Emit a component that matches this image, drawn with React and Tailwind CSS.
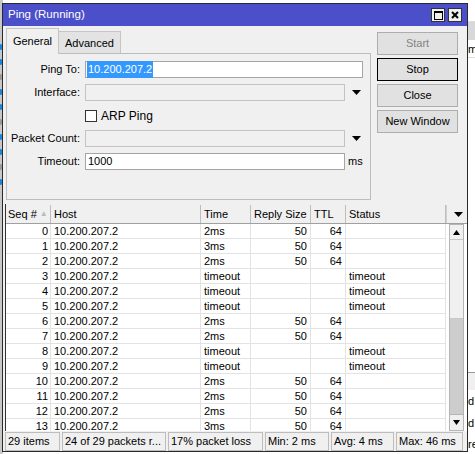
import React from "react";

const rows = [
  [0, "2ms", 50, 64, ""],
  [1, "3ms", 50, 64, ""],
  [2, "2ms", 50, 64, ""],
  [3, "timeout", "", "", "timeout"],
  [4, "timeout", "", "", "timeout"],
  [5, "timeout", "", "", "timeout"],
  [6, "2ms", 50, 64, ""],
  [7, "2ms", 50, 64, ""],
  [8, "timeout", "", "", "timeout"],
  [9, "timeout", "", "", "timeout"],
  [10, "2ms", 50, 64, ""],
  [11, "2ms", 50, 64, ""],
  [12, "2ms", 50, 64, ""],
  [13, "3ms", 50, 64, ""],
];

const cols = "grid grid-cols-[45px_150px_50px_60px_35px_100px]";

function Arrow() {
  return (
    <svg width="9" height="5" viewBox="0 0 9 5">
      <path d="M0 0h9L4.5 5z" fill="#000" />
    </svg>
  );
}

function Field({ label, children }) {
  return (
    <div className="flex h-[23px] items-center">
      <div className="w-[74px] pr-[1px] text-right">{label}:</div>
      <div className="ml-[4px] flex items-center">{children}</div>
    </div>
  );
}

function Btn({ children, bold, muted }) {
  return (
    <div
      className={
        "flex h-[23px] items-center justify-center border bg-[#e1e1e1] " +
        (bold ? "border-[#000] border-[1.5px] " : "border-[#adadad] ") +
        (muted ? "text-[#838383]" : "")
      }
    >
      {children}
    </div>
  );
}

export default function App() {
  return (
    <div
      className="relative h-[454px] w-[475px] overflow-hidden bg-white text-[11px] text-black"
      style={{ fontFamily: '"Liberation Sans", Arial, sans-serif' }}
    >
      {/* desktop behind */}
      <div className="flex h-full">
        <div className="flex w-[3px] flex-col gap-[9px] bg-[#c8c8c8] pt-[44px]">
          {Array.from({ length: 10 }).map((_, i) => (
            <div key={i} className={"h-[6px] w-[3px] rounded-r-full " + (i % 3 === 2 ? "bg-[#9a9a9a]" : "bg-[#1c86d8]")} />
          ))}
        </div>
        <div className="flex-1" />
        <div className="flex w-[8px] flex-col bg-white">
          <div className="h-[22px] border-b border-[#ddd]" />
          <div className="h-[18px] bg-[#d8d8d8]" />
          <div className="h-[18px] border-b border-[#ddd] pl-[1px] leading-[18px]">m</div>
          <div className="flex-1" />
          <div className="h-[18px] border-t border-[#999] bg-[#f0f0f0]" />
          <div className="h-[22px] pl-[1px] leading-[22px]">d</div>
          <div className="h-[22px] pl-[1px] leading-[22px]">d</div>
          <div className="h-[20px] pl-[1px] leading-[20px]">re</div>
        </div>
      </div>

      {/* window */}
      <div className="absolute left-[2px] top-[3px] flex h-[449px] w-[466px] flex-col border border-[#2a2a2a] bg-[#f0f0f0]">
        <div className="flex h-[22px] items-center bg-[#4b4fc9] pl-[5px] pr-[5px] text-[11.5px] text-white">
          <span className="flex-1">Ping (Running)</span>
          <div className="flex gap-[3px]">
            <div className="flex h-[14px] w-[14px] items-center justify-center border border-[#333] bg-[#f0f0f0]">
              <div className="h-[9px] w-[9px] border border-black border-t-2" />
            </div>
            <div className="flex h-[14px] w-[14px] items-center justify-center border border-[#333] bg-[#f0f0f0]">
              <svg width="8" height="8" viewBox="0 0 8 8">
                <path d="M1 1l6 6M7 1L1 7" stroke="#000" strokeWidth="2" />
              </svg>
            </div>
          </div>
        </div>

        <div className="flex pl-[3px] pt-[2px]">
          <div className="flex w-[365px] flex-col">
            <div className="flex h-[25px] items-end">
              <div className="relative z-10 -mb-px flex h-[26px] w-[53px] items-center justify-center border border-b-0 border-[#c5c5c5] bg-[#f0f0f0] pb-[1px]">
                General
              </div>
              <div className="flex h-[22px] w-[62px] items-center justify-center border border-b-0 border-l-0 border-[#c5c5c5] bg-[#e3e3e3] pt-[2px]">
                Advanced
              </div>
            </div>
            <div className="flex h-[147px] flex-col border border-[#bdbdbd] pt-[4px]">
              <Field label="Ping To">
                <div className="flex h-[17px] w-[278px] items-center border border-[#a5a5a5] bg-white pl-[1px]">
                  <span className="bg-[#3399ff] px-[1px] text-white">10.200.207.2</span>
                </div>
              </Field>
              <Field label="Interface">
                <div className="h-[17px] w-[260px] border border-[#c3c3c3] bg-[#f0f0f0]" />
                <div className="ml-[7px]"><Arrow /></div>
              </Field>
              <div className="flex h-[23px] items-center pl-[78px]">
                <div className="h-[12px] w-[12px] border border-[#333] bg-white" />
                <span className="ml-[4px] text-[12px]">ARP Ping</span>
              </div>
              <Field label="Packet Count">
                <div className="h-[17px] w-[260px] border border-[#c3c3c3] bg-[#f0f0f0]" />
                <div className="ml-[7px]"><Arrow /></div>
              </Field>
              <Field label="Timeout">
                <div className="flex h-[17px] w-[260px] items-center border border-[#a5a5a5] bg-white pl-[2px]">1000</div>
                <span className="ml-[3px]">ms</span>
              </Field>
            </div>
          </div>
          <div className="ml-[6px] flex w-[81px] flex-col gap-[3px] pt-[4px]">
            <Btn muted>Start</Btn>
            <Btn bold>Stop</Btn>
            <Btn>Close</Btn>
            <Btn>New Window</Btn>
          </div>
        </div>

        {/* table */}
        <div className="ml-[2px] mt-[4px] flex h-[227px] flex-col border-l border-[#333]">
          <div className="flex h-[20px] flex-none border-b border-[#a0a0a0] bg-[#f0f0f0] pt-[1px]">
            <div className={cols + " flex-none"}>
              <div className="flex items-center border-r border-[#bdbdbd] pl-[2px]">
                Seq # <span className="ml-[3px] text-[8px] text-[#bbb]">▲</span>
              </div>
              <div className="flex items-center border-r border-[#bdbdbd] pl-[3px]">Host</div>
              <div className="flex items-center border-r border-[#bdbdbd] pl-[3px]">Time</div>
              <div className="flex items-center border-r border-[#bdbdbd] pl-[3px]">Reply Size</div>
              <div className="flex items-center border-r border-[#bdbdbd] pl-[3px]">TTL</div>
              <div className="flex items-center border-r border-[#bdbdbd] pl-[3px]">Status</div>
            </div>
            <div className="flex flex-1 items-center justify-center border-l border-[#d0d0d0] pl-[2px]">
              <Arrow />
            </div>
          </div>
          <div className="flex min-h-0 flex-1 overflow-hidden bg-white">
            <div className="flex-none overflow-hidden">
              {rows.map(([seq, time, size, ttl, status]) => (
                <div key={seq} className={cols + " h-[15px] border-b border-[#e3e3e3] leading-[15px]"}>
                  <div className="border-r border-[#e3e3e3] pr-[2px] text-right">{seq}</div>
                  <div className="border-r border-[#e3e3e3] pl-[3px]">10.200.207.2</div>
                  <div className="border-r border-[#e3e3e3] pl-[3px]">{time}</div>
                  <div className="border-r border-[#e3e3e3] pr-[3px] text-right">{size}</div>
                  <div className="border-r border-[#e3e3e3] pr-[3px] text-right">{ttl}</div>
                  <div className="border-r border-[#e3e3e3] pl-[3px]">{status}</div>
                </div>
              ))}
            </div>
            <div className="w-[3px]" />
            <div className="flex w-[15px] flex-col border border-[#b5b5b5] bg-[#f0f0f0]">
              <div className="flex h-[14px] items-center justify-center">
                <svg width="7" height="5" viewBox="0 0 7 5"><path d="M0 5h7L3.5 0z" fill="#000" /></svg>
              </div>
              <div className="h-[80px] border-y border-[#c8c8c8] bg-[#f0f0f0]" />
              <div className="flex-1 bg-[#cdcdcd]" />
              <div className="flex h-[16px] items-center justify-center border-t border-[#b5b5b5]">
                <svg width="7" height="5" viewBox="0 0 7 5"><path d="M0 0h7L3.5 5z" fill="#000" /></svg>
              </div>
            </div>
          </div>
        </div>

        {/* status bar */}
        <div className="flex h-[20px] gap-[2px] pl-[2px] pr-[4px] pt-[1px]">
          {[
            ["29 items", "w-[55px]"],
            ["24 of 29 packets r...", "w-[104px]"],
            ["17% packet loss", "w-[95px]"],
            ["Min: 2 ms", "w-[64px]"],
            ["Avg: 4 ms", "w-[63px]"],
            ["Max: 46 ms", "flex-1"],
          ].map(([t, w]) => (
            <div key={t} className={w + " flex items-center border border-[#bdbdbd] pl-[2px]"}>
              {t}
            </div>
          ))}
        </div>
      </div>
    </div>
  );
}
